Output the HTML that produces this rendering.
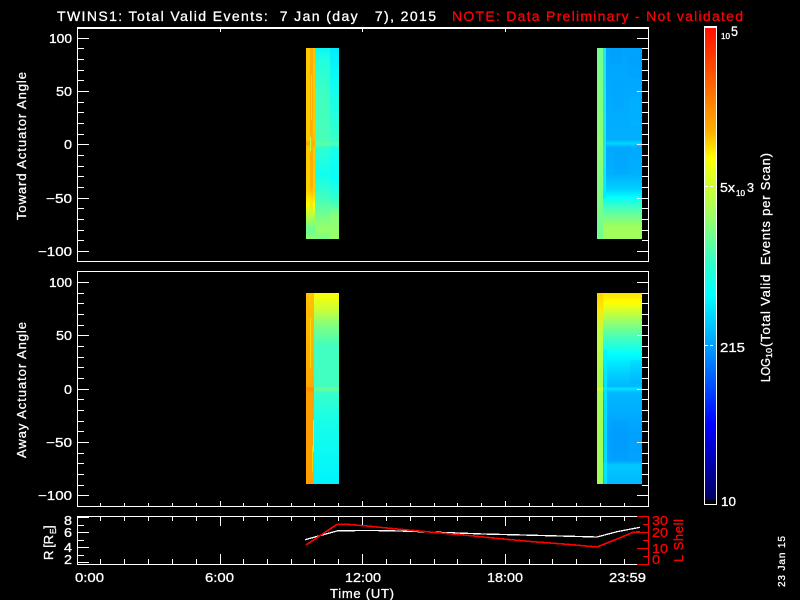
<!DOCTYPE html>
<html>
<head>
<meta charset="utf-8">
<style>
html,body{margin:0;padding:0;background:#000;width:800px;height:600px;overflow:hidden}
svg{display:block}
text{font-family:"Liberation Sans",sans-serif;fill:#fff;stroke:#fff;stroke-width:.3;white-space:pre}
text.r{fill:#f00;stroke:#f00}
.t{font-size:13px}
</style>
</head>
<body>
<svg width="800" height="600" viewBox="0 0 800 600" xmlns="http://www.w3.org/2000/svg">
<defs>
<linearGradient id="a1" gradientUnits="userSpaceOnUse" x1="0" y1="48" x2="0" y2="239"><stop offset="0" stop-color="#ffc800"/><stop offset=".48" stop-color="#ffc800"/><stop offset=".5" stop-color="#ffa800"/><stop offset=".52" stop-color="#ffc800"/><stop offset=".75" stop-color="#ffd000"/><stop offset=".82" stop-color="#ffff00"/><stop offset=".9" stop-color="#a0ff50"/><stop offset=".95" stop-color="#60ffa0"/><stop offset="1" stop-color="#90ff70"/></linearGradient>
<linearGradient id="a2" gradientUnits="userSpaceOnUse" x1="0" y1="48" x2="0" y2="239"><stop offset="0" stop-color="#ffb000"/><stop offset=".72" stop-color="#ffb000"/><stop offset=".8" stop-color="#ffe800"/><stop offset=".87" stop-color="#c0ff40"/><stop offset=".95" stop-color="#70ff90"/><stop offset="1" stop-color="#90ff70"/></linearGradient>
<linearGradient id="a3" gradientUnits="userSpaceOnUse" x1="0" y1="48" x2="0" y2="239"><stop offset="0" stop-color="#08f8f8"/><stop offset=".06" stop-color="#20ffe0"/><stop offset=".25" stop-color="#40ffc0"/><stop offset=".49" stop-color="#48ffb8"/><stop offset=".5" stop-color="#68ff98"/><stop offset=".52" stop-color="#30ffd0"/><stop offset=".66" stop-color="#10fff0"/><stop offset=".78" stop-color="#40ffc0"/><stop offset=".9" stop-color="#80ff80"/><stop offset=".95" stop-color="#98ff68"/><stop offset="1" stop-color="#78ff88"/></linearGradient>
<linearGradient id="a4" gradientUnits="userSpaceOnUse" x1="0" y1="48" x2="0" y2="239"><stop offset="0" stop-color="#00ecff"/><stop offset=".2" stop-color="#10fff0"/><stop offset=".49" stop-color="#38ffc8"/><stop offset=".5" stop-color="#60ffa0"/><stop offset=".52" stop-color="#18ffe8"/><stop offset=".68" stop-color="#08fff8"/><stop offset=".8" stop-color="#38ffc8"/><stop offset=".88" stop-color="#88ff78"/><stop offset="1" stop-color="#98ff68"/></linearGradient>
<linearGradient id="b1" gradientUnits="userSpaceOnUse" x1="0" y1="48" x2="0" y2="239"><stop offset="0" stop-color="#70ff90"/><stop offset=".5" stop-color="#90ff70"/><stop offset="1" stop-color="#70ff90"/></linearGradient>
<linearGradient id="b2" gradientUnits="userSpaceOnUse" x1="0" y1="48" x2="0" y2="239"><stop offset="0" stop-color="#00a4ff"/><stop offset=".3" stop-color="#00acff"/><stop offset=".48" stop-color="#00b0ff"/><stop offset=".5" stop-color="#00d8ff"/><stop offset=".52" stop-color="#00a8ff"/><stop offset=".66" stop-color="#00b0ff"/><stop offset=".74" stop-color="#00d0ff"/><stop offset=".78" stop-color="#00ffff"/><stop offset=".82" stop-color="#30ffd0"/><stop offset=".88" stop-color="#70ff90"/><stop offset=".94" stop-color="#a0ff58"/><stop offset="1" stop-color="#a0ff60"/></linearGradient>
<linearGradient id="c1" gradientUnits="userSpaceOnUse" x1="0" y1="293" x2="0" y2="484"><stop offset="0" stop-color="#ffc000"/><stop offset=".49" stop-color="#ffa800"/><stop offset=".5" stop-color="#ff8800"/><stop offset=".52" stop-color="#ffa000"/><stop offset="1" stop-color="#ffa000"/></linearGradient>
<linearGradient id="c3" gradientUnits="userSpaceOnUse" x1="0" y1="293" x2="0" y2="484"><stop offset="0" stop-color="#ffff00"/><stop offset=".09" stop-color="#c8ff38"/><stop offset=".17" stop-color="#80ff80"/><stop offset=".28" stop-color="#40ffc0"/><stop offset=".49" stop-color="#40ffc0"/><stop offset=".5" stop-color="#70ff90"/><stop offset=".52" stop-color="#38ffc8"/><stop offset=".66" stop-color="#18ffe8"/><stop offset="1" stop-color="#00f4ff"/></linearGradient>
<linearGradient id="d1" gradientUnits="userSpaceOnUse" x1="0" y1="293" x2="0" y2="484"><stop offset="0" stop-color="#ffd000"/><stop offset=".08" stop-color="#ffe800"/><stop offset=".2" stop-color="#c0ff40"/><stop offset=".49" stop-color="#a8ff50"/><stop offset=".5" stop-color="#d8ff20"/><stop offset=".52" stop-color="#a8ff50"/><stop offset="1" stop-color="#a0ff58"/></linearGradient>
<linearGradient id="d2" gradientUnits="userSpaceOnUse" x1="0" y1="293" x2="0" y2="484"><stop offset="0" stop-color="#ffe000"/><stop offset=".05" stop-color="#ffff00"/><stop offset=".14" stop-color="#a0ff60"/><stop offset=".24" stop-color="#40ffc0"/><stop offset=".32" stop-color="#00ffff"/><stop offset=".42" stop-color="#00d0ff"/><stop offset=".49" stop-color="#00b8ff"/><stop offset=".5" stop-color="#00e8ff"/><stop offset=".52" stop-color="#00b8ff"/><stop offset=".75" stop-color="#00a0ff"/><stop offset=".88" stop-color="#00a4ff"/><stop offset=".9" stop-color="#00c8ff"/><stop offset="1" stop-color="#00b8ff"/></linearGradient>
<linearGradient id="cb" gradientUnits="userSpaceOnUse" x1="0" y1="28" x2="0" y2="500"><stop offset="0" stop-color="#ff1000"/><stop offset=".114" stop-color="#ff6000"/><stop offset=".22" stop-color="#ffb000"/><stop offset=".275" stop-color="#ffff00"/><stop offset=".333" stop-color="#d0ff30"/><stop offset=".396" stop-color="#a0ff60"/><stop offset=".496" stop-color="#30ffc8"/><stop offset=".566" stop-color="#00ffff"/><stop offset=".672" stop-color="#00a0ff"/><stop offset=".84" stop-color="#0000ff"/><stop offset="1" stop-color="#000060"/></linearGradient>
</defs>
<rect width="800" height="600" fill="#000"/>

<g shape-rendering="crispEdges">
<!-- panel 1 left block -->
<rect x="306" y="48" width="4" height="191" fill="url(#a1)"/>
<rect x="310" y="48" width="3" height="191" fill="url(#a2)"/>
<rect x="313" y="48" width="2" height="191" fill="url(#a1)"/>
<rect x="315" y="48" width="15" height="191" fill="url(#a3)"/>
<rect x="330" y="48" width="9" height="191" fill="url(#a4)"/>
<rect x="311" y="75" width="1" height="45" fill="#ffe000"/>
<rect x="310" y="137" width="1" height="14" fill="#c0ff40"/>
<!-- panel 1 right block -->
<rect x="597" y="48" width="6" height="191" fill="url(#b1)"/>
<rect x="606" y="48" width="36" height="191" fill="url(#b2)"/>
<rect x="603" y="48" width="3" height="120" fill="#20e8e8"/>
<rect x="603" y="168" width="3" height="30" fill="#00f0ff"/>
<rect x="603" y="198" width="3" height="41" fill="url(#b2)"/>
<rect x="610" y="50" width="12" height="14" fill="#0090ff" opacity=".2"/>
<rect x="628" y="54" width="14" height="24" fill="#0090ff" opacity=".15"/>
<rect x="613" y="82" width="10" height="30" fill="#0098ff" opacity=".15"/>
<rect x="630" y="96" width="10" height="30" fill="#00c0ff" opacity=".2"/>
<rect x="614" y="152" width="14" height="22" fill="#0090ff" opacity=".15"/>

<!-- panel 2 left block -->
<rect x="306" y="293" width="8" height="191" fill="url(#c1)"/>
<rect x="309" y="293" width="2" height="14" fill="#ffc800"/>
<rect x="310" y="318" width="1" height="50" fill="#ffd800"/>
<rect x="313" y="420" width="1" height="32" fill="#ffe000"/>
<rect x="312" y="446" width="1" height="26" fill="#ffd000"/>
<rect x="314" y="293" width="25" height="191" fill="url(#c3)"/>
<!-- panel 2 right block -->
<rect x="597" y="293" width="6" height="191" fill="url(#d1)"/>
<rect x="603" y="293" width="39" height="191" fill="url(#d2)"/>
<rect x="604" y="350" width="3" height="134" fill="#00f0ff" opacity=".75"/>
<rect x="612" y="420" width="16" height="40" fill="#0088ff" opacity=".15"/>
<rect x="630" y="360" width="12" height="24" fill="#00a0ff" opacity=".2"/>

<!-- frame lines -->
<g fill="#fff">
<rect x="77" y="27" width="572" height="2"/><rect x="77" y="261" width="572" height="1"/>
<rect x="77" y="27" width="1" height="235"/><rect x="648" y="27" width="1" height="235"/>
<rect x="77" y="271" width="572" height="1"/><rect x="77" y="506" width="572" height="1"/>
<rect x="77" y="271" width="1" height="236"/><rect x="648" y="271" width="1" height="236"/>
<rect x="77" y="516" width="560" height="1"/><rect x="77" y="564" width="560" height="1"/>
<rect x="77" y="516" width="1" height="49"/>
</g>
<!-- y ticks -->
<path stroke="#fff" fill="none" d="M77 38.5H89M77 91.5H89M77 144.5H89M77 198.5H89M77 251.5H89M648 38.5H637M648 91.5H637M648 144.5H637M648 198.5H637M648 251.5H637
M77 48.5H84M77 59.5H84M77 70.5H84M77 80.5H84M77 102.5H84M77 112.5H84M77 123.5H84M77 134.5H84M77 155.5H84M77 166.5H84M77 176.5H84M77 187.5H84M77 208.5H84M77 219.5H84M77 230.5H84M77 240.5H84
M648 48.5H642M648 59.5H642M648 70.5H642M648 80.5H642M648 102.5H642M648 112.5H642M648 123.5H642M648 134.5H642M648 155.5H642M648 166.5H642M648 176.5H642M648 187.5H642M648 208.5H642M648 219.5H642M648 230.5H642M648 240.5H642
M77 282.5H89M77 335.5H89M77 389.5H89M77 442.5H89M77 495.5H89M648 282.5H637M648 335.5H637M648 389.5H637M648 442.5H637M648 495.5H637
M77 293.5H84M77 303.5H84M77 314.5H84M77 325.5H84M77 346.5H84M77 357.5H84M77 367.5H84M77 378.5H84M77 399.5H84M77 410.5H84M77 421.5H84M77 431.5H84M77 453.5H84M77 463.5H84M77 474.5H84M77 485.5H84
M648 293.5H642M648 303.5H642M648 314.5H642M648 325.5H642M648 346.5H642M648 357.5H642M648 367.5H642M648 378.5H642M648 399.5H642M648 410.5H642M648 421.5H642M648 431.5H642M648 453.5H642M648 463.5H642M648 474.5H642M648 485.5H642
M77 517.5H89M77 532.5H89M77 547.5H89M77 562.5H89M77 525.5H84M77 540.5H84M77 555.5H84"/>
<!-- x ticks -->
<path stroke="#fff" fill="none" d="M100.5 27V29M124.5 27V29M148.5 27V29M172.5 27V29M196.5 27V29M243.5 27V29M267.5 27V29M291.5 27V29M314.5 27V29M338.5 27V29M386.5 27V29M410.5 27V29M434.5 27V29M457.5 27V29M481.5 27V29M529.5 27V29M552.5 27V29M576.5 27V29M600.5 27V29M624.5 27V29M220.5 27V32M362.5 27V32M505.5 27V32
M100.5 506V503M124.5 506V503M148.5 506V503M172.5 506V503M196.5 506V503M243.5 506V503M267.5 506V503M291.5 506V503M314.5 506V503M338.5 506V503M386.5 506V503M410.5 506V503M434.5 506V503M457.5 506V503M481.5 506V503M529.5 506V503M552.5 506V503M576.5 506V503M600.5 506V503M624.5 506V503M220.5 506V501M362.5 506V501M505.5 506V501
M100.5 516V521M124.5 516V521M148.5 516V521M172.5 516V521M196.5 516V521M243.5 516V521M267.5 516V521M291.5 516V521M314.5 516V521M338.5 516V521M386.5 516V521M410.5 516V521M434.5 516V521M457.5 516V521M481.5 516V521M529.5 516V521M552.5 516V521M576.5 516V521M600.5 516V521M624.5 516V521M220.5 516V526M362.5 516V526M505.5 516V526
M100.5 564V559M124.5 564V559M148.5 564V559M172.5 564V559M196.5 564V559M243.5 564V559M267.5 564V559M291.5 564V559M314.5 564V559M338.5 564V559M386.5 564V559M410.5 564V559M434.5 564V559M457.5 564V559M481.5 564V559M529.5 564V559M552.5 564V559M576.5 564V559M600.5 564V559M624.5 564V559M220.5 564V554M362.5 564V554M505.5 564V554"/>
<!-- red axis -->
<path stroke="#f00" fill="none" d="M648.5 516V565M637 516.5H649M637 564.5H649M643 524.5H649M637 532.5H649M643 540.5H649M637 548.5H649M643 556.5H649"/>
<!-- colorbar -->
<rect x="705" y="28" width="11" height="472" fill="url(#cb)"/>
<rect x="704" y="26" width="13" height="2" fill="#fff"/>
<rect x="704" y="504" width="13" height="1" fill="#fff"/>
<rect x="704" y="26" width="1" height="479" fill="#fff"/>
<rect x="716" y="26" width="1" height="479" fill="#fff"/>
<path stroke="#fff" fill="none" d="M705 186.5H708M710 186.5H713M705 345.5H708M710 345.5H713"/>
</g>

<!-- data lines -->
<polyline fill="none" stroke="#fff" stroke-width="1.3" shape-rendering="crispEdges" points="305,539.7 338,530.7 373,530.5 400,531 450,532.7 483,534 523,535 560,536 597,537 617,531.7 640,527.3"/>
<polyline fill="none" stroke="#f00" stroke-width="1.6" shape-rendering="crispEdges" points="306,545 337,524.3 347,524.3 367,526 400,529.3 433,532.3 467,535.3 500,538.7 533,541.7 567,544.3 597,547 617,539 633,532.3 640,531.7"/>

<!-- title -->
<text x="57" y="21" font-size="14" textLength="379" lengthAdjust="spacing">TWINS1: Total Valid Events:  7 Jan (day   7), 2015</text>
<text x="452" y="21" font-size="14" class="r" textLength="291" lengthAdjust="spacing">NOTE: Data Preliminary - Not validated</text>

<!-- y labels -->
<g class="t">
<text x="49" y="43" textLength="23" lengthAdjust="spacingAndGlyphs">100</text>
<text x="56" y="96" textLength="16" lengthAdjust="spacingAndGlyphs">50</text>
<text x="64" y="149" textLength="8" lengthAdjust="spacingAndGlyphs">0</text>
<text x="46" y="203" textLength="26" lengthAdjust="spacingAndGlyphs">−50</text>
<text x="38" y="256" textLength="34" lengthAdjust="spacingAndGlyphs">−100</text>
<text x="49" y="287" textLength="23" lengthAdjust="spacingAndGlyphs">100</text>
<text x="56" y="340" textLength="16" lengthAdjust="spacingAndGlyphs">50</text>
<text x="64" y="394" textLength="8" lengthAdjust="spacingAndGlyphs">0</text>
<text x="46" y="447" textLength="26" lengthAdjust="spacingAndGlyphs">−50</text>
<text x="38" y="500" textLength="34" lengthAdjust="spacingAndGlyphs">−100</text>
<text x="64" y="525" textLength="8" lengthAdjust="spacingAndGlyphs">8</text>
<text x="64" y="537" textLength="8" lengthAdjust="spacingAndGlyphs">6</text>
<text x="64" y="552" textLength="8" lengthAdjust="spacingAndGlyphs">4</text>
<text x="64" y="564" textLength="8" lengthAdjust="spacingAndGlyphs">2</text>
<text x="75" y="582" textLength="29" lengthAdjust="spacingAndGlyphs">0:00</text>
<text x="205" y="582" textLength="29" lengthAdjust="spacingAndGlyphs">6:00</text>
<text x="345" y="582" textLength="36" lengthAdjust="spacingAndGlyphs">12:00</text>
<text x="487" y="582" textLength="36" lengthAdjust="spacingAndGlyphs">18:00</text>
<text x="609" y="582" textLength="37" lengthAdjust="spacingAndGlyphs">23:59</text>
<text x="330" y="598" textLength="64" lengthAdjust="spacing">Time (UT)</text>
<text class="r" x="652" y="525" textLength="16" lengthAdjust="spacingAndGlyphs">30</text>
<text class="r" x="652" y="537" textLength="16" lengthAdjust="spacingAndGlyphs">20</text>
<text class="r" x="652" y="553" textLength="16" lengthAdjust="spacingAndGlyphs">10</text>
<text class="r" x="652" y="564" textLength="8" lengthAdjust="spacingAndGlyphs">0</text>
</g>

<!-- rotated axis titles -->
<text transform="translate(26 220) rotate(-90)" font-size="13" textLength="148" lengthAdjust="spacing">Toward Actuator Angle</text>
<text transform="translate(26 458) rotate(-90)" font-size="13" textLength="136" lengthAdjust="spacing">Away Actuator Angle</text>
<text transform="translate(53 560) rotate(-90)" font-size="13" textLength="25" lengthAdjust="spacing">R [R</text>
<text transform="translate(56 534) rotate(-90)" font-size="8">E</text>
<text transform="translate(53 529) rotate(-90)" font-size="13">]</text>
<text class="r" transform="translate(683 562) rotate(-90)" font-size="13" textLength="43" lengthAdjust="spacing">L Shell</text>
<text transform="translate(785 587) rotate(-90)" font-size="10" textLength="51" lengthAdjust="spacing">23 Jan 15</text>

<!-- colorbar labels -->
<text x="721" y="39" font-size="8" textLength="9" lengthAdjust="spacingAndGlyphs">10</text>
<text x="731" y="36" font-size="14" textLength="7" lengthAdjust="spacingAndGlyphs">5</text>
<text x="720" y="192" font-size="13" textLength="15" lengthAdjust="spacingAndGlyphs">5x</text>
<text x="736" y="196" font-size="8" textLength="9" lengthAdjust="spacingAndGlyphs">10</text>
<text x="747" y="192" font-size="13" textLength="7" lengthAdjust="spacingAndGlyphs">3</text>
<text x="720" y="352" font-size="13" textLength="25" lengthAdjust="spacingAndGlyphs">215</text>
<text x="721" y="506" font-size="13" textLength="15" lengthAdjust="spacingAndGlyphs">10</text>

<text transform="translate(770 382) rotate(-90)" font-size="13" textLength="24" lengthAdjust="spacingAndGlyphs">LOG</text>
<text transform="translate(772 358) rotate(-90)" font-size="8" textLength="10" lengthAdjust="spacingAndGlyphs">10</text>
<text transform="translate(770 347) rotate(-90)" font-size="13" textLength="194" lengthAdjust="spacing">(Total Valid  Events per Scan)</text>
</svg>
</body>
</html>
